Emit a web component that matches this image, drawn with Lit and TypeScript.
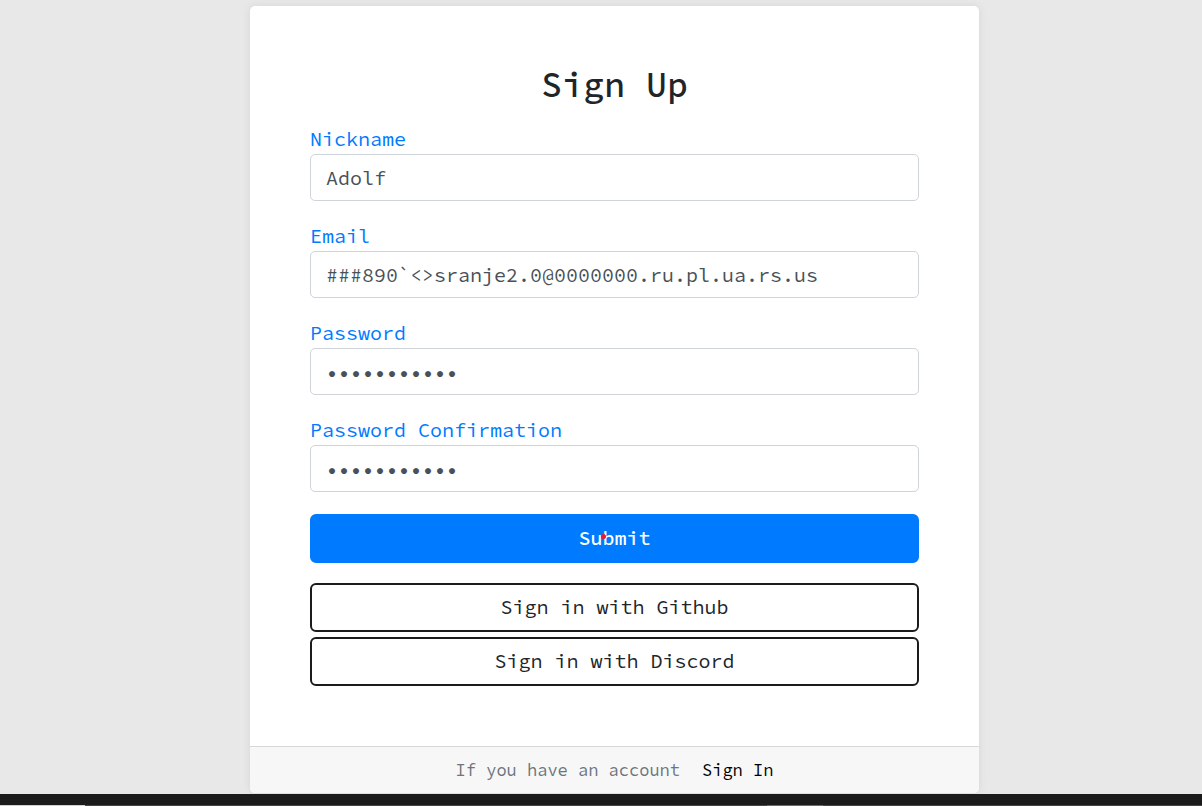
import { LitElement, html, css } from "lit";
import { customElement } from "lit/decorators.js";

interface Field {
  id: string;
  label: string;
  type: "text" | "password";
  value: string;
}

@customElement("app-root")
export class AppRoot extends LitElement {
  static styles = css`
    :host {
      display: flex;
      flex-direction: column;
      min-height: 100vh;
      background: #e8e8e8;
      color: #212529;
      font-family: "Source Code Pro", "Liberation Mono", monospace;
      font-size: 20px;
      font-weight: 400;
      line-height: 30px;
    }
    * {
      box-sizing: border-box;
    }
    main {
      flex: 1;
      padding: 6px 0 0 27px;
    }
    .card {
      max-width: 729px;
      margin: 0 auto;
      background: #fff;
      border-radius: 5px;
      box-shadow: 0 0 8px rgba(0, 0, 0, 0.08);
      overflow: hidden;
    }
    .body {
      padding: 58px 60px 60px;
    }
    h1 {
      margin: 0 0 18px;
      font-size: 35px;
      line-height: 42px;
      font-weight: 500;
      text-align: center;
    }
    .fields {
      display: grid;
      gap: 20px;
      margin-bottom: 22px;
    }
    label {
      display: block;
      color: #007bff;
    }
    input {
      display: block;
      width: 100%;
      height: 47px;
      padding: 0 15px;
      border: 1px solid #ced4da;
      border-radius: 5px;
      background: #fff;
      color: #495057;
      font: inherit;
      outline: none;
    }
    button {
      display: block;
      width: 100%;
      height: 49px;
      padding: 0 0 2px;
      border: 2px solid #1b1b1b;
      border-radius: 6px;
      background: #fff;
      color: #212529;
      font: inherit;
      cursor: pointer;
    }
    .submit {
      position: relative;
      border-color: #007bff;
      background: #007bff;
      color: #fff;
      font-weight: 500;
    }
    .pointer {
      position: absolute;
      top: 18px;
      left: calc(50% - 14px);
      width: 5px;
      height: 5px;
      border-radius: 50%;
      background: #ed1c24;
    }
    .providers {
      display: grid;
      gap: 5px;
      margin-top: 20px;
    }
    .switch {
      display: flex;
      flex-wrap: wrap;
      justify-content: center;
      gap: 0 22px;
      padding: 8px 20px;
      border-top: 1px solid #d8d8d8;
      background: #f7f7f7;
      color: #6c757d;
      font-size: 17px;
    }
    .switch a {
      color: #000;
      text-decoration: none;
    }
    .bottom {
      display: flex;
      height: 12px;
      padding-top: 11px;
      background: #1b1b1b;
    }
    .edge {
      background: #454545;
      flex: 1;
    }
    .edge.light {
      flex: 0 0 85px;
      background: #d0d0d0;
    }
    .edge.middle {
      flex: 0 0 56px;
      background: #6a6a6a;
    }
    .edge.wide {
      flex: 9 1 0;
    }
    .edge.rest {
      flex: 5 1 0;
    }
  `;

  private fields: Field[] = [
    { id: "nickname", label: "Nickname", type: "text", value: "Adolf" },
    { id: "email", label: "Email", type: "text", value: "###890`<>sranje2.0@0000000.ru.pl.ua.rs.us" },
    { id: "password", label: "Password", type: "password", value: "password123" },
    { id: "confirmation", label: "Password Confirmation", type: "password", value: "password123" },
  ];

  render() {
    return html`
      <main>
        <section class="card">
          <div class="body">
            <h1>Sign Up</h1>
            <form @submit=${(e: Event) => e.preventDefault()}>
              <div class="fields">
                ${this.fields.map(
                  (f) => html`
                    <div>
                      <label for=${f.id}>${f.label}</label>
                      <input id=${f.id} type=${f.type} .value=${f.value} spellcheck="false" autocomplete="off" />
                    </div>
                  `
                )}
              </div>
              <button class="submit" type="submit">Submit<span class="pointer"></span></button>
            </form>
            <div class="providers">
              <button type="button">Sign in with Github</button>
              <button type="button">Sign in with Discord</button>
            </div>
          </div>
          <div class="switch">
            <span>If you have an account</span>
            <a href="#signin">Sign In</a>
          </div>
        </section>
      </main>
      <footer class="bottom">
        <div class="edge light"></div>
        <div class="edge wide"></div>
        <div class="edge middle"></div>
        <div class="edge rest"></div>
      </footer>
    `;
  }
}
